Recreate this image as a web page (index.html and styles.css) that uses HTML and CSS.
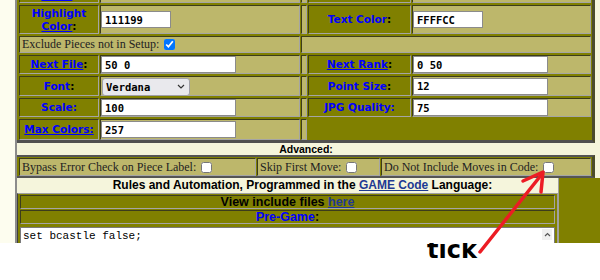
FILE: index.html
```html
<!DOCTYPE html>
<html lang="en">
<head>
  <meta charset="UTF-8">
  <title>Game Settings</title>
  <link rel="stylesheet" href="styles.css">
</head>
<body>
  <div class="shot">
    <div class="frame">
      <div class="props">
        <div class="cell lbl"><span><a href="#">Square Color</a>:</span></div>
        <div class="cell val"></div>
        <div class="cell val"></div>
        <div class="cell lbl"></div>
        <div class="cell val"></div>

        <div class="cell lbl"><span><span class="key">Highlight</span> <a href="#">Color</a>:</span></div>
        <div class="cell val"><input class="field short" type="text" value="111199"></div>
        <div class="cell val"></div>
        <div class="cell lbl"><span><span class="key">Text Color</span>:</span></div>
        <div class="cell val"><input class="field short" type="text" value="FFFFCC"></div>

        <div class="cell val text span2">Exclude Pieces not in Setup: <input class="tick-box" type="checkbox" checked></div>
        <div class="cell val span3"></div>

        <div class="cell lbl"><span><a href="#">Next File</a>:</span></div>
        <div class="cell val"><input class="field" type="text" value="50 0"></div>
        <div class="cell val"></div>
        <div class="cell lbl"><span><a href="#">Next Rank</a>:</span></div>
        <div class="cell val"><input class="field" type="text" value="0 50"></div>

        <div class="cell lbl"><span><span class="key">Font</span>:</span></div>
        <div class="cell val">
          <span class="sel">
            <select class="field-select">
              <option>Verdana</option>
            </select>
            <svg class="chev" width="8" height="5" viewBox="0 0 8 5"><path d="M1 1l3 3 3-3" fill="none" stroke="#333" stroke-width="1.2"/></svg>
          </span>
        </div>
        <div class="cell val"></div>
        <div class="cell lbl"><span><span class="key">Point Size</span>:</span></div>
        <div class="cell val"><input class="field" type="text" value="12"></div>

        <div class="cell lbl"><span class="key">Scale:</span></div>
        <div class="cell val"><input class="field" type="text" value="100"></div>
        <div class="cell val"></div>
        <div class="cell lbl"><span class="key">JPG Quality:</span></div>
        <div class="cell val"><input class="field" type="text" value="75"></div>

        <div class="cell lbl"><a href="#">Max Colors:</a></div>
        <div class="cell val"><input class="field" type="text" value="257"></div>
        <div class="cell val"></div>
      </div>

      <div class="adv-title">Advanced:</div>

      <div class="adv-row">
        <div class="cell val text">Bypass Error Check on Piece Label: <input class="tick-box" type="checkbox"></div>
        <div class="cell val text">Skip First Move: <input class="tick-box" type="checkbox"></div>
        <div class="cell val text">Do Not Include Moves in Code: <input class="tick-box" type="checkbox"></div>
      </div>

      <div class="rules">
        <div class="rules-main">
          <div class="rules-title">Rules and Automation, Programmed in the <a href="#">GAME Code</a> Language:</div>
          <div class="code-box">
            <div class="cell bar"><span>View include files <a href="#">here</a></span></div>
            <div class="cell bar"><span><span class="key">Pre-Game</span>:</span></div>
            <div class="code-wrap">
              <textarea class="code" rows="3">set bcastle false;</textarea>
              <span class="scroll-up">
                <svg width="7" height="5" viewBox="0 0 7 5"><path d="M1 4l2.5-2.5L6 4" fill="none" stroke="#555" stroke-width="1.2"/></svg>
              </span>
            </div>
          </div>
        </div>
        <div class="rules-side"></div>
      </div>
    </div>
  </div>

  <div class="note">tick</div>

  <svg class="arrow" width="600" height="280" viewBox="0 0 600 280">
    <path d="M480 252L542 174" fill="none" stroke="#ec1c24" stroke-width="3.5" stroke-linecap="round"/>
    <path d="M523 181L543 172L541 192" fill="none" stroke="#ec1c24" stroke-width="3.5" stroke-linecap="round" stroke-linejoin="round"/>
  </svg>
</body>
</html>
```

FILE: styles.css
```css
body {
  margin: 0;
  background: #fff;
  font-family: "Liberation Serif", serif;
  position: relative;
  width: 600px;
  height: 280px;
  overflow: hidden;
}

.shot {
  height: 243px;
  overflow: hidden;
  background: #fdfdef;
  padding-left: 15px;
}

.frame {
  border-left: 2px solid #8c8c8c;
  background: #f5f5dc;
  margin-top: -26px;
  height: 269px;
}

.props {
  display: grid;
  grid-template-columns: 80px 200px 6px 103px 179px;
  grid-template-rows: 29px 29px 17px 19px 20px 19px 21px;
  column-gap: 1px;
  row-gap: 2px;
  width: 578px;
  box-sizing: border-box;
  padding: 0 1px 0 2px;
  background: #808000;
  border-right: 3px solid #4b4b2b;
  border-bottom: 3px solid #505050;
}

.cell {
  border: 1px solid;
  border-color: #3c3c1c #a5a5a5 #a5a5a5 #3c3c1c;
  box-sizing: border-box;
  display: flex;
  align-items: center;
}

.lbl {
  background: #808000;
  justify-content: center;
  text-align: center;
  font: bold 10.5px/13px "DejaVu Sans", sans-serif;
  color: #000;
}

.lbl a, .key {
  color: #0000ff;
}

.val {
  background: #bdb76b;
}

.text {
  padding-left: 2px;
  font-size: 12px;
  color: #222;
}

.span2 {
  grid-column: span 2;
}

.span3 {
  grid-column: span 3;
}

.field {
  width: 135px;
  height: 17px;
  box-sizing: border-box;
  margin: 0;
  padding: 0 3px;
  border: 1px solid #8b8b8b;
  background: #fff;
  color: #000;
  font: bold 10.5px "DejaVu Sans Mono", monospace;
}

.field.short {
  width: 70px;
}

.tick-box {
  width: 11px;
  height: 11px;
  margin: 0 0 0 5px;
}

.sel {
  position: relative;
  display: inline-block;
  margin-left: 1px;
}

.field-select {
  appearance: none;
  width: 88px;
  height: 18px;
  margin: 0;
  padding: 0 3px;
  border: 1px solid #a0a0a8;
  border-radius: 3px;
  background: #e9e9ed;
  color: #000;
  font: bold 10.5px "DejaVu Sans Mono", monospace;
}

.chev {
  position: absolute;
  right: 5px;
  top: 7px;
}

.adv-title {
  width: 578px;
  height: 12px;
  text-align: center;
  font: bold 10.5px/12px "Liberation Sans", sans-serif;
}

.adv-row {
  display: grid;
  grid-template-columns: 237px 123px 210px;
  grid-template-rows: 18px;
  column-gap: 1px;
  width: 578px;
  box-sizing: border-box;
  padding: 1px 1px 0 2px;
  background: #808000;
  border-top: 2px solid #555;
  border-bottom: 2px solid #555;
  border-right: 3px solid #4b4b2b;
}

.rules {
  display: flex;
  height: 92px;
}

.rules-main {
  width: 541px;
}

.rules-side {
  flex: 1;
  background: #808000;
  border-left: 1px solid #a0a0a0;
}

.rules-title {
  height: 15px;
  margin-right: -30px;
  text-align: center;
  font: bold 12px/15px "Liberation Sans", sans-serif;
}

.rules-title a, .bar a {
  color: #1f3a93;
}

.code-box {
  display: grid;
  grid-template-rows: 14px 14px auto;
  row-gap: 1px;
  padding: 1px 2px;
  background: #808000;
  border: 1px solid;
  border-color: #a0a0a0 #a0a0a0 #404040 #404040;
}

.bar {
  justify-content: center;
  font: bold 12.5px/12px "Liberation Sans", sans-serif;
  background: #808000;
}

.code-wrap {
  position: relative;
  margin-top: 2px;
}

.code {
  display: block;
  width: 100%;
  height: 40px;
  box-sizing: border-box;
  margin: 0;
  padding: 2px 2px;
  border: 1px solid #7a7a7a;
  resize: none;
  overflow: hidden;
  font: 11px/13px "Liberation Mono", monospace;
  color: #000;
}

.scroll-up {
  position: absolute;
  right: 3px;
  top: 2px;
  width: 10px;
  height: 11px;
  background: #f0f0f0;
  display: flex;
  align-items: center;
  justify-content: center;
}

.note {
  margin: -5px 0 0 427px;
  font: bold 24px/24px "DejaVu Sans", sans-serif;
  color: #000;
}

.arrow {
  position: absolute;
  left: 0;
  top: 0;
  pointer-events: none;
}
```
